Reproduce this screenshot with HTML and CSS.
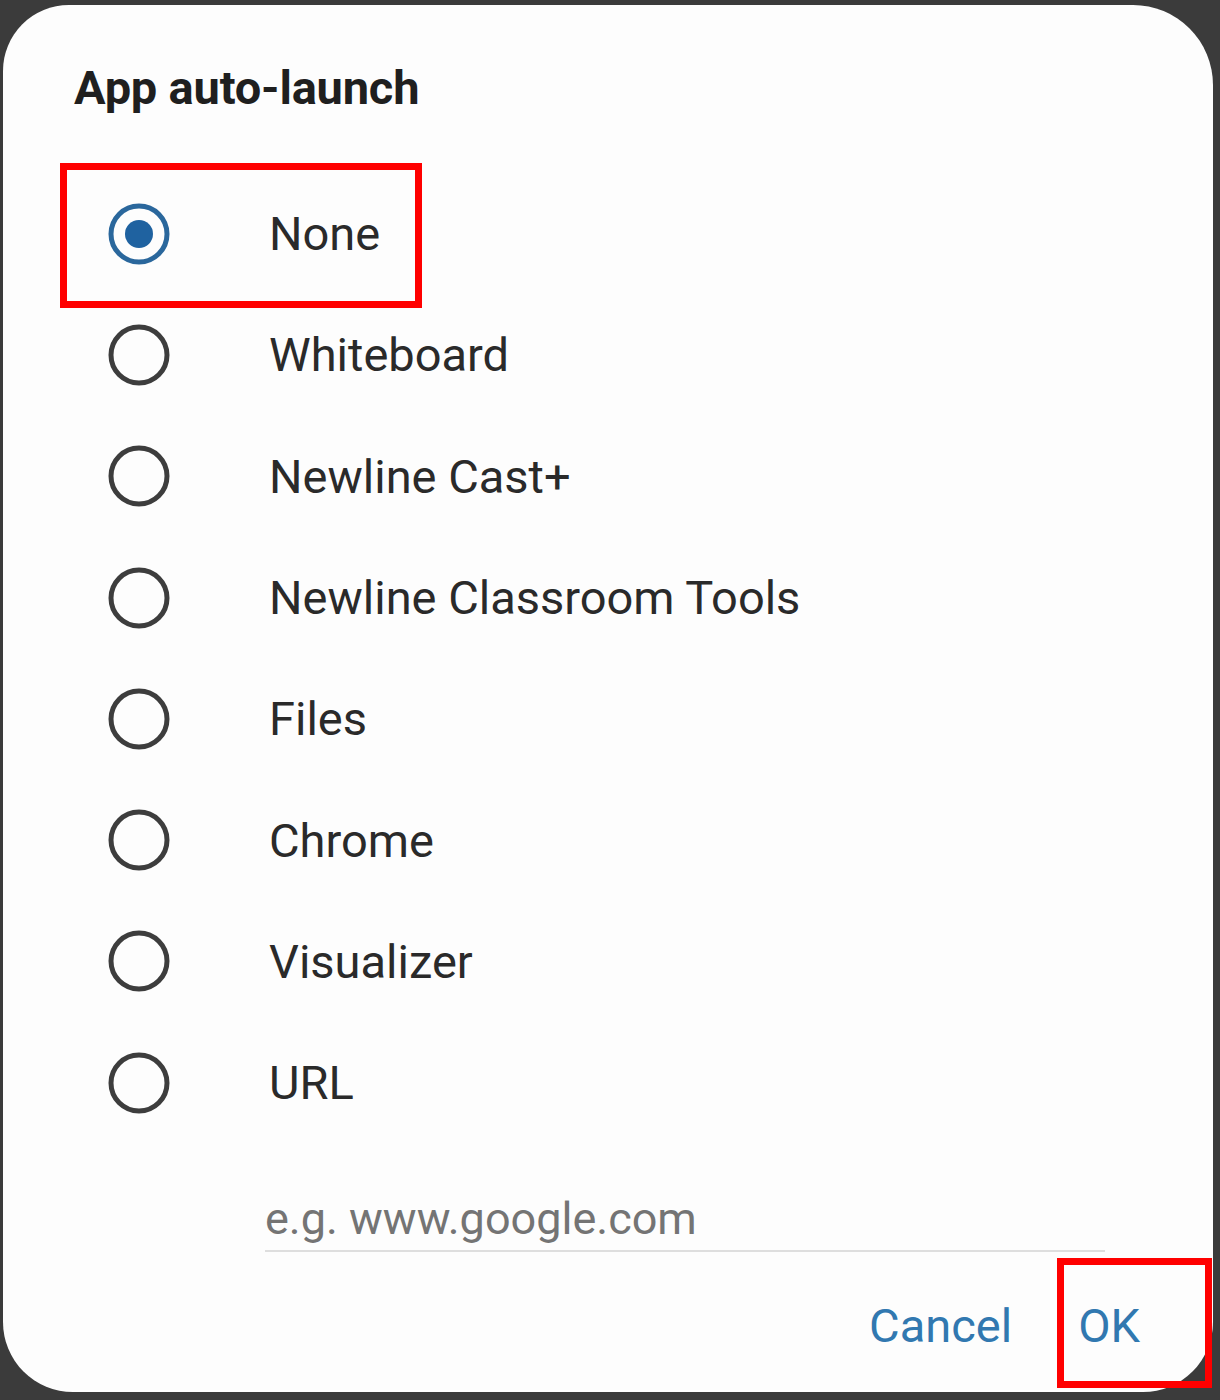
FILE: index.html
```html
<!DOCTYPE html>
<html>
<head>
    <title>App auto-launch</title>
    <link rel="stylesheet" href="styles.css">
</head>
<body>
    <div class="dialog">
        <h2 class="dialog-title">App auto-launch</h2>

        <ul class="option-list">
            <li class="option selected">
                <svg class="radio" width="66" height="66" viewBox="0 0 66 66">
                    <circle cx="33" cy="33" r="28" fill="none" stroke="#2a679c" stroke-width="5"/>
                    <circle cx="33" cy="33" r="14" fill="#1f62a0"/>
                </svg>
                <span class="option-label">None</span>
            </li>
            <li class="option">
                <svg class="radio" width="66" height="66" viewBox="0 0 66 66">
                    <circle cx="33" cy="33" r="28" fill="none" stroke="#3d3d3d" stroke-width="5"/>
                </svg>
                <span class="option-label">Whiteboard</span>
            </li>
            <li class="option">
                <svg class="radio" width="66" height="66" viewBox="0 0 66 66">
                    <circle cx="33" cy="33" r="28" fill="none" stroke="#3d3d3d" stroke-width="5"/>
                </svg>
                <span class="option-label">Newline Cast+</span>
            </li>
            <li class="option">
                <svg class="radio" width="66" height="66" viewBox="0 0 66 66">
                    <circle cx="33" cy="33" r="28" fill="none" stroke="#3d3d3d" stroke-width="5"/>
                </svg>
                <span class="option-label">Newline Classroom Tools</span>
            </li>
            <li class="option">
                <svg class="radio" width="66" height="66" viewBox="0 0 66 66">
                    <circle cx="33" cy="33" r="28" fill="none" stroke="#3d3d3d" stroke-width="5"/>
                </svg>
                <span class="option-label">Files</span>
            </li>
            <li class="option">
                <svg class="radio" width="66" height="66" viewBox="0 0 66 66">
                    <circle cx="33" cy="33" r="28" fill="none" stroke="#3d3d3d" stroke-width="5"/>
                </svg>
                <span class="option-label">Chrome</span>
            </li>
            <li class="option">
                <svg class="radio" width="66" height="66" viewBox="0 0 66 66">
                    <circle cx="33" cy="33" r="28" fill="none" stroke="#3d3d3d" stroke-width="5"/>
                </svg>
                <span class="option-label">Visualizer</span>
            </li>
            <li class="option">
                <svg class="radio" width="66" height="66" viewBox="0 0 66 66">
                    <circle cx="33" cy="33" r="28" fill="none" stroke="#3d3d3d" stroke-width="5"/>
                </svg>
                <span class="option-label">URL</span>
            </li>
        </ul>

        <div class="url-field">
            <input class="url-input" type="text" placeholder="e.g. www.google.com">
        </div>

        <div class="dialog-actions">
            <button class="action-btn">Cancel</button>
            <button class="action-btn">OK</button>
        </div>
    </div>

    <!-- annotation boxes drawn over the screenshot -->
    <div class="mark mark-none"></div>
    <div class="mark mark-ok"></div>
</body>
</html>
```

FILE: styles.css
```css
body {
    margin: 0;
    background: #3b3b3b;
    font-family: Roboto, "Liberation Sans", Arial, sans-serif;
    position: relative;
    height: 1400px;
    overflow: hidden;
}
.dialog {
    box-sizing: border-box;
    margin: 5px 7px 0 3px;
    height: 1387px;
    background: #fdfdfd;
    border-radius: 66px 80px 70px 70px;
    padding-top: 58px;
    display: flex;
    flex-direction: column;
}
.dialog-title {
    margin: 0 0 0 71px;
    font-size: 47px;
    line-height: 50px;
    font-weight: 700;
    color: #1f1f1f;
    letter-spacing: -0.2px;
}
.option-list {
    list-style: none;
    margin: 60px 0 0 0;
    padding: 0;
}
.option {
    height: 121.3px;
    display: flex;
    align-items: center;
}
.radio {
    margin-left: 103px;
    flex-shrink: 0;
}
.option-label {
    margin-left: 97px;
    font-size: 47px;
    color: #2a2a2a;
}
.url-field {
    margin: 51px 108px 0 262px;
    border-bottom: 2px solid #dedede;
    padding-bottom: 6px;
}
.url-input {
    width: 100%;
    border: none;
    outline: none;
    background: transparent;
    padding: 0;
    font-family: inherit;
    font-size: 45px;
    line-height: 50px;
    height: 50px;
    color: #333;
}
.url-input::placeholder {
    color: #747474;
}
.dialog-actions {
    margin-top: 49px;
    padding-right: 73px;
    display: flex;
    justify-content: flex-end;
    gap: 66px;
}
.action-btn {
    border: none;
    background: none;
    padding: 0;
    font-family: inherit;
    font-size: 47px;
    line-height: 50px;
    color: #3178b0;
    cursor: pointer;
}
.mark {
    position: absolute;
    box-sizing: border-box;
    border: 7px solid #ff0000;
}
.mark-none {
    left: 60px;
    top: 163px;
    width: 362px;
    height: 145px;
}
.mark-ok {
    left: 1057px;
    top: 1258px;
    width: 155px;
    height: 130px;
}
```
